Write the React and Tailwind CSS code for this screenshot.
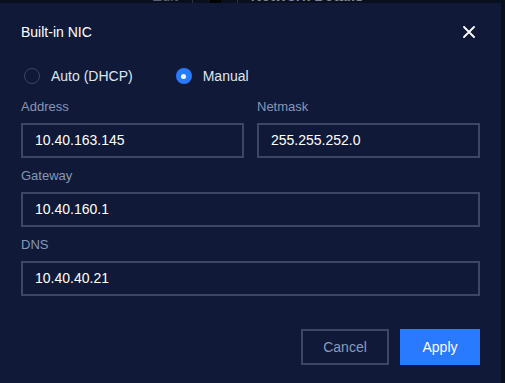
import React, { useState } from 'react';

const Field = ({ label, value, className = '' }) => (
  <div className={`flex flex-col ${className}`}>
    <label className="h-4 text-[13px] leading-4 text-[#8797b8] mb-2">{label}</label>
    <div className="h-[35px] border-2 border-[#3b4763] flex items-center px-3 text-[14px] text-white">
      {value}
    </div>
  </div>
);

const Radio = ({ checked, label, onClick }) => (
  <button onClick={onClick} className="flex items-center gap-[11px] h-5">
    {checked ? (
      <span className="w-4 h-4 rounded-full bg-[#2a7aff] flex items-center justify-center">
        <span className="w-[5px] h-[5px] rounded-full bg-white"></span>
      </span>
    ) : (
      <span className="w-4 h-4 rounded-full border border-[#3b4660]"></span>
    )}
    <span className="text-[14px] text-[#dfe5f0]">{label}</span>
  </button>
);

const App = () => {
  const [mode, setMode] = useState('manual');

  return (
    <div className="w-[505px] h-[383px] overflow-hidden bg-[#0a0f1e]" style={{ fontFamily: '"Liberation Sans", Arial, sans-serif' }}>
      {/* page behind the dialog */}
      <div className="h-[3px] overflow-hidden relative">
        <div className="flex items-center -mt-[12px] h-[16px] text-[15px] pl-[152px]">
          <span className="text-[#55617e]">Edit</span>
          <span className="w-px h-4 bg-[#2a3246] ml-[14px]"></span>
          <span className="w-[11px] h-4 bg-black ml-[17px]"></span>
          <span className="w-px h-4 bg-[#2a3246] ml-[16px]"></span>
          <span className="ml-[13px] font-bold text-[#7c869c]">Network Details</span>
        </div>
      </div>

      <div className="w-[501px] h-[380px] bg-[#101a38] px-[21px]">
        <div className="flex items-center justify-between pt-[19px] h-[39px]">
          <h2 className="text-[14px] leading-5 text-white">Built-in NIC</h2>
          <button className="mr-[5px] text-white">
            <svg width="12" height="12" viewBox="0 0 12 12" fill="none" stroke="currentColor" strokeWidth="1.8" strokeLinecap="round">
              <path d="M1 1L11 11M11 1L1 11" />
            </svg>
          </button>
        </div>

        <div className="flex items-center gap-[43px] mt-[24px] pl-[3px]">
          <Radio checked={mode === 'auto'} label="Auto (DHCP)" onClick={() => setMode('auto')} />
          <Radio checked={mode === 'manual'} label="Manual" onClick={() => setMode('manual')} />
        </div>

        <div className="mt-[13px] w-[459px] flex flex-col gap-[10px]">
          <div className="grid grid-cols-2 gap-[13px]">
            <Field label="Address" value="10.40.163.145" />
            <Field label="Netmask" value="255.255.252.0" />
          </div>
          <Field label="Gateway" value="10.40.160.1" />
          <Field label="DNS" value="10.40.40.21" />
        </div>

        <div className="w-[459px] flex justify-end gap-[11px] mt-[33px]">
          <button className="w-[88px] h-[36px] border-2 border-[#3b4763] text-[14px] text-[#8a9bbd]">Cancel</button>
          <button className="w-[80px] h-[36px] bg-[#2a7aff] text-[14px] text-white">Apply</button>
        </div>
      </div>
    </div>
  );
};

export default App;
